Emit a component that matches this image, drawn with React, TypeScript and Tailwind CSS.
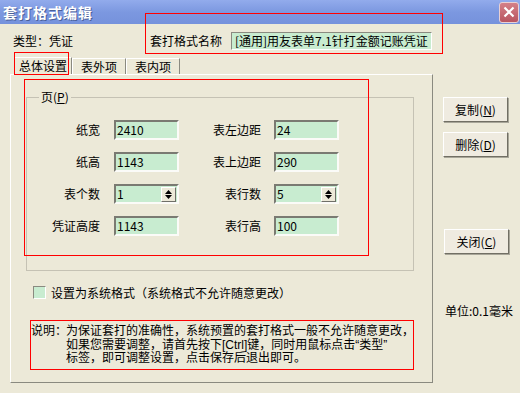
import React from "react";

const font = { fontFamily: '"Noto Sans CJK SC", "Noto Sans", sans-serif' };
const noteFont = { fontFamily: '"Liberation Sans", "Noto Sans CJK SC", sans-serif' };

function Field({ value, spin }: { value: string; spin?: boolean }) {
  return (
    <div className="relative flex h-[20px] w-[65px] items-center border-2 border-t-[#7a7a72] border-l-[#7a7a72] border-b-[#fbfbf8] border-r-[#fbfbf8] bg-[#c8ecd0]">
      <span className="pl-[1px] text-[12px] leading-none text-black">{value}</span>
      {spin && (
        <div className="absolute right-[1px] top-[1px] flex h-[15px] w-[15px] flex-col items-center justify-center gap-[1px] border border-t-white border-l-white border-b-[#6f6f68] border-r-[#6f6f68] bg-[#ece9d8]">
          <svg width="7" height="4" viewBox="0 0 7 4"><path d="M3.5 0L7 4H0Z" fill="#000" /></svg>
          <svg width="7" height="4" viewBox="0 0 7 4"><path d="M0 0H7L3.5 4Z" fill="#000" /></svg>
        </div>
      )}
    </div>
  );
}

function Btn({ label, k }: { label: string; k: string }) {
  return (
    <div className="flex h-[25px] w-[65px] items-center justify-center border border-t-white border-l-white border-b-[#716f64] border-r-[#716f64] bg-[#efebe0] text-[12px] text-black shadow-[1px_1px_0_#a8a699]">
      {label}(<span className="underline">{k}</span>)
    </div>
  );
}

export default function App() {
  const rows: [string, string, boolean, string, string, boolean][] = [
    ["纸宽", "2410", false, "表左边距", "24", false],
    ["纸高", "1143", false, "表上边距", "290", false],
    ["表个数", "1", true, "表行数", "5", true],
    ["凭证高度", "1143", false, "表行高", "100", false],
  ];
  return (
    <div className="relative h-[393px] w-[520px] overflow-hidden bg-[#ece9d8] text-black" style={font}>
      {/* title bar */}
      <div className="flex h-[24px] items-center justify-between bg-gradient-to-b from-[#92abec] via-[#7c98e0] to-[#7592dc]">
        <span className="pl-[3px] text-[14px] font-bold tracking-[1px] text-white [text-shadow:1px_1px_0_#4a5f99]">套打格式编辑</span>
        <div className="mr-[1px] flex h-[21px] w-[20px] items-center justify-center rounded-[3px] border border-[#e8d0d4] bg-gradient-to-b from-[#d48088] to-[#b85560]">
          <svg width="12" height="12" viewBox="0 0 12 12"><path d="M1.5 1.5L10.5 10.5M10.5 1.5L1.5 10.5" stroke="#fff" strokeWidth="2.2" /></svg>
        </div>
      </div>

      {/* row 1 */}
      <div className="mt-[8px] flex h-[18px] items-center text-[12px]">
        <span className="ml-[13px] w-[137px]">类型：凭证</span>
        <span className="w-[72px]">套打格式名称</span>
        <div className="ml-[9px] flex h-[18px] w-[201px] items-center border border-t-[#8a8a80] border-l-[#8a8a80] border-b-white border-r-white bg-[#c8ecd0] pl-[3px]">
          <span className="whitespace-nowrap text-[12px] leading-none">[通用]用友表单7.1针打金额记账凭证</span>
        </div>
      </div>

      {/* row 2 */}
      <div className="mt-[7px] flex">
        <div className="ml-[10px] w-[423px]">
          <div className="flex h-[17px] items-end pl-[4px] text-[12px]">
            <div className="flex h-[17px] w-[58px] items-center justify-center border-l border-t border-r border-l-white border-t-white border-r-[#8a8a80] bg-[#ece9d8]">总体设置</div>
            <div className="flex h-[16px] w-[54px] items-center justify-center border-l border-t border-r border-l-white border-t-white border-r-[#8a8a80]">表外项</div>
            <div className="flex h-[16px] w-[54px] items-center justify-center border-l border-t border-r border-l-white border-t-white border-r-[#8a8a80]">表内项</div>
          </div>
          <div className="h-[309px] border border-t-white border-l-white border-b-[#8a8a80] border-r-[#8a8a80]">
            <div className="relative ml-[15px] mt-[22px] h-[174px] w-[388px] border border-[#c5c2b4] pt-[22px]">
              <span className="absolute -top-[9px] left-[12px] bg-[#ece9d8] px-[2px] text-[12px] leading-[16px]">
                页(<span className="underline">P</span>)
              </span>
              <div className="flex flex-col gap-y-[12px]">
                {rows.map((r) => (
                  <div key={r[0]} className="flex h-[20px] items-center text-[12px]">
                    <span className="w-[87px] pr-[14px] text-right">{r[0]}</span>
                    <Field value={r[1]} spin={r[2]} />
                    <span className="w-[95px] pr-[13px] text-right">{r[3]}</span>
                    <Field value={r[4]} spin={r[5]} />
                  </div>
                ))}
              </div>
            </div>
            <div className="ml-[22px] mt-[15px] flex h-[13px] items-center text-[12px]">
              <div className="h-[13px] w-[13px] border border-t-[#8a8a80] border-l-[#8a8a80] border-b-white border-r-white bg-[#c8ecd0]" />
              <span className="ml-[5px]">设置为系统格式（系统格式不允许随意更改）</span>
            </div>
            <div className="ml-[20px] mt-[26px] flex text-[12px] leading-[13.5px]" style={noteFont}>
              <span className="w-[35px] shrink-0 whitespace-nowrap">说明：</span>
              <div>
                <div className="whitespace-nowrap">为保证套打的准确性，系统预置的套打格式一般不允许随意更改，</div>
                <div className="whitespace-nowrap">如果您需要调整，请首先按下[Ctrl]键，同时用鼠标点击“类型”</div>
                <div className="whitespace-nowrap">标签，即可调整设置，点击保存后退出即可。</div>
              </div>
            </div>
          </div>
        </div>
        <div className="ml-[10px] flex flex-col">
          <div className="mt-[40px]"><Btn label="复制" k="N" /></div>
          <div className="mt-[10px]"><Btn label="删除" k="D" /></div>
          <div className="ml-[1px] mt-[72px]"><Btn label="关闭" k="C" /></div>
          <div className="ml-[2px] mt-[50px] whitespace-nowrap text-[12px] leading-[14px]">单位:0.1毫米</div>
        </div>
      </div>

      {/* red annotation boxes */}
      <div className="pointer-events-none absolute left-[145px] top-[13px] h-[41px] w-[298px] border border-[#ff0000]" />
      <div className="pointer-events-none absolute left-[14px] top-[52px] h-[23px] w-[55px] border border-[#ff0000]" />
      <div className="pointer-events-none absolute left-[24px] top-[79px] h-[177px] w-[345px] border border-[#ff0000]" />
      <div className="pointer-events-none absolute left-[30px] top-[320px] h-[50px] w-[384px] border border-[#ff0000]" />
    </div>
  );
}
